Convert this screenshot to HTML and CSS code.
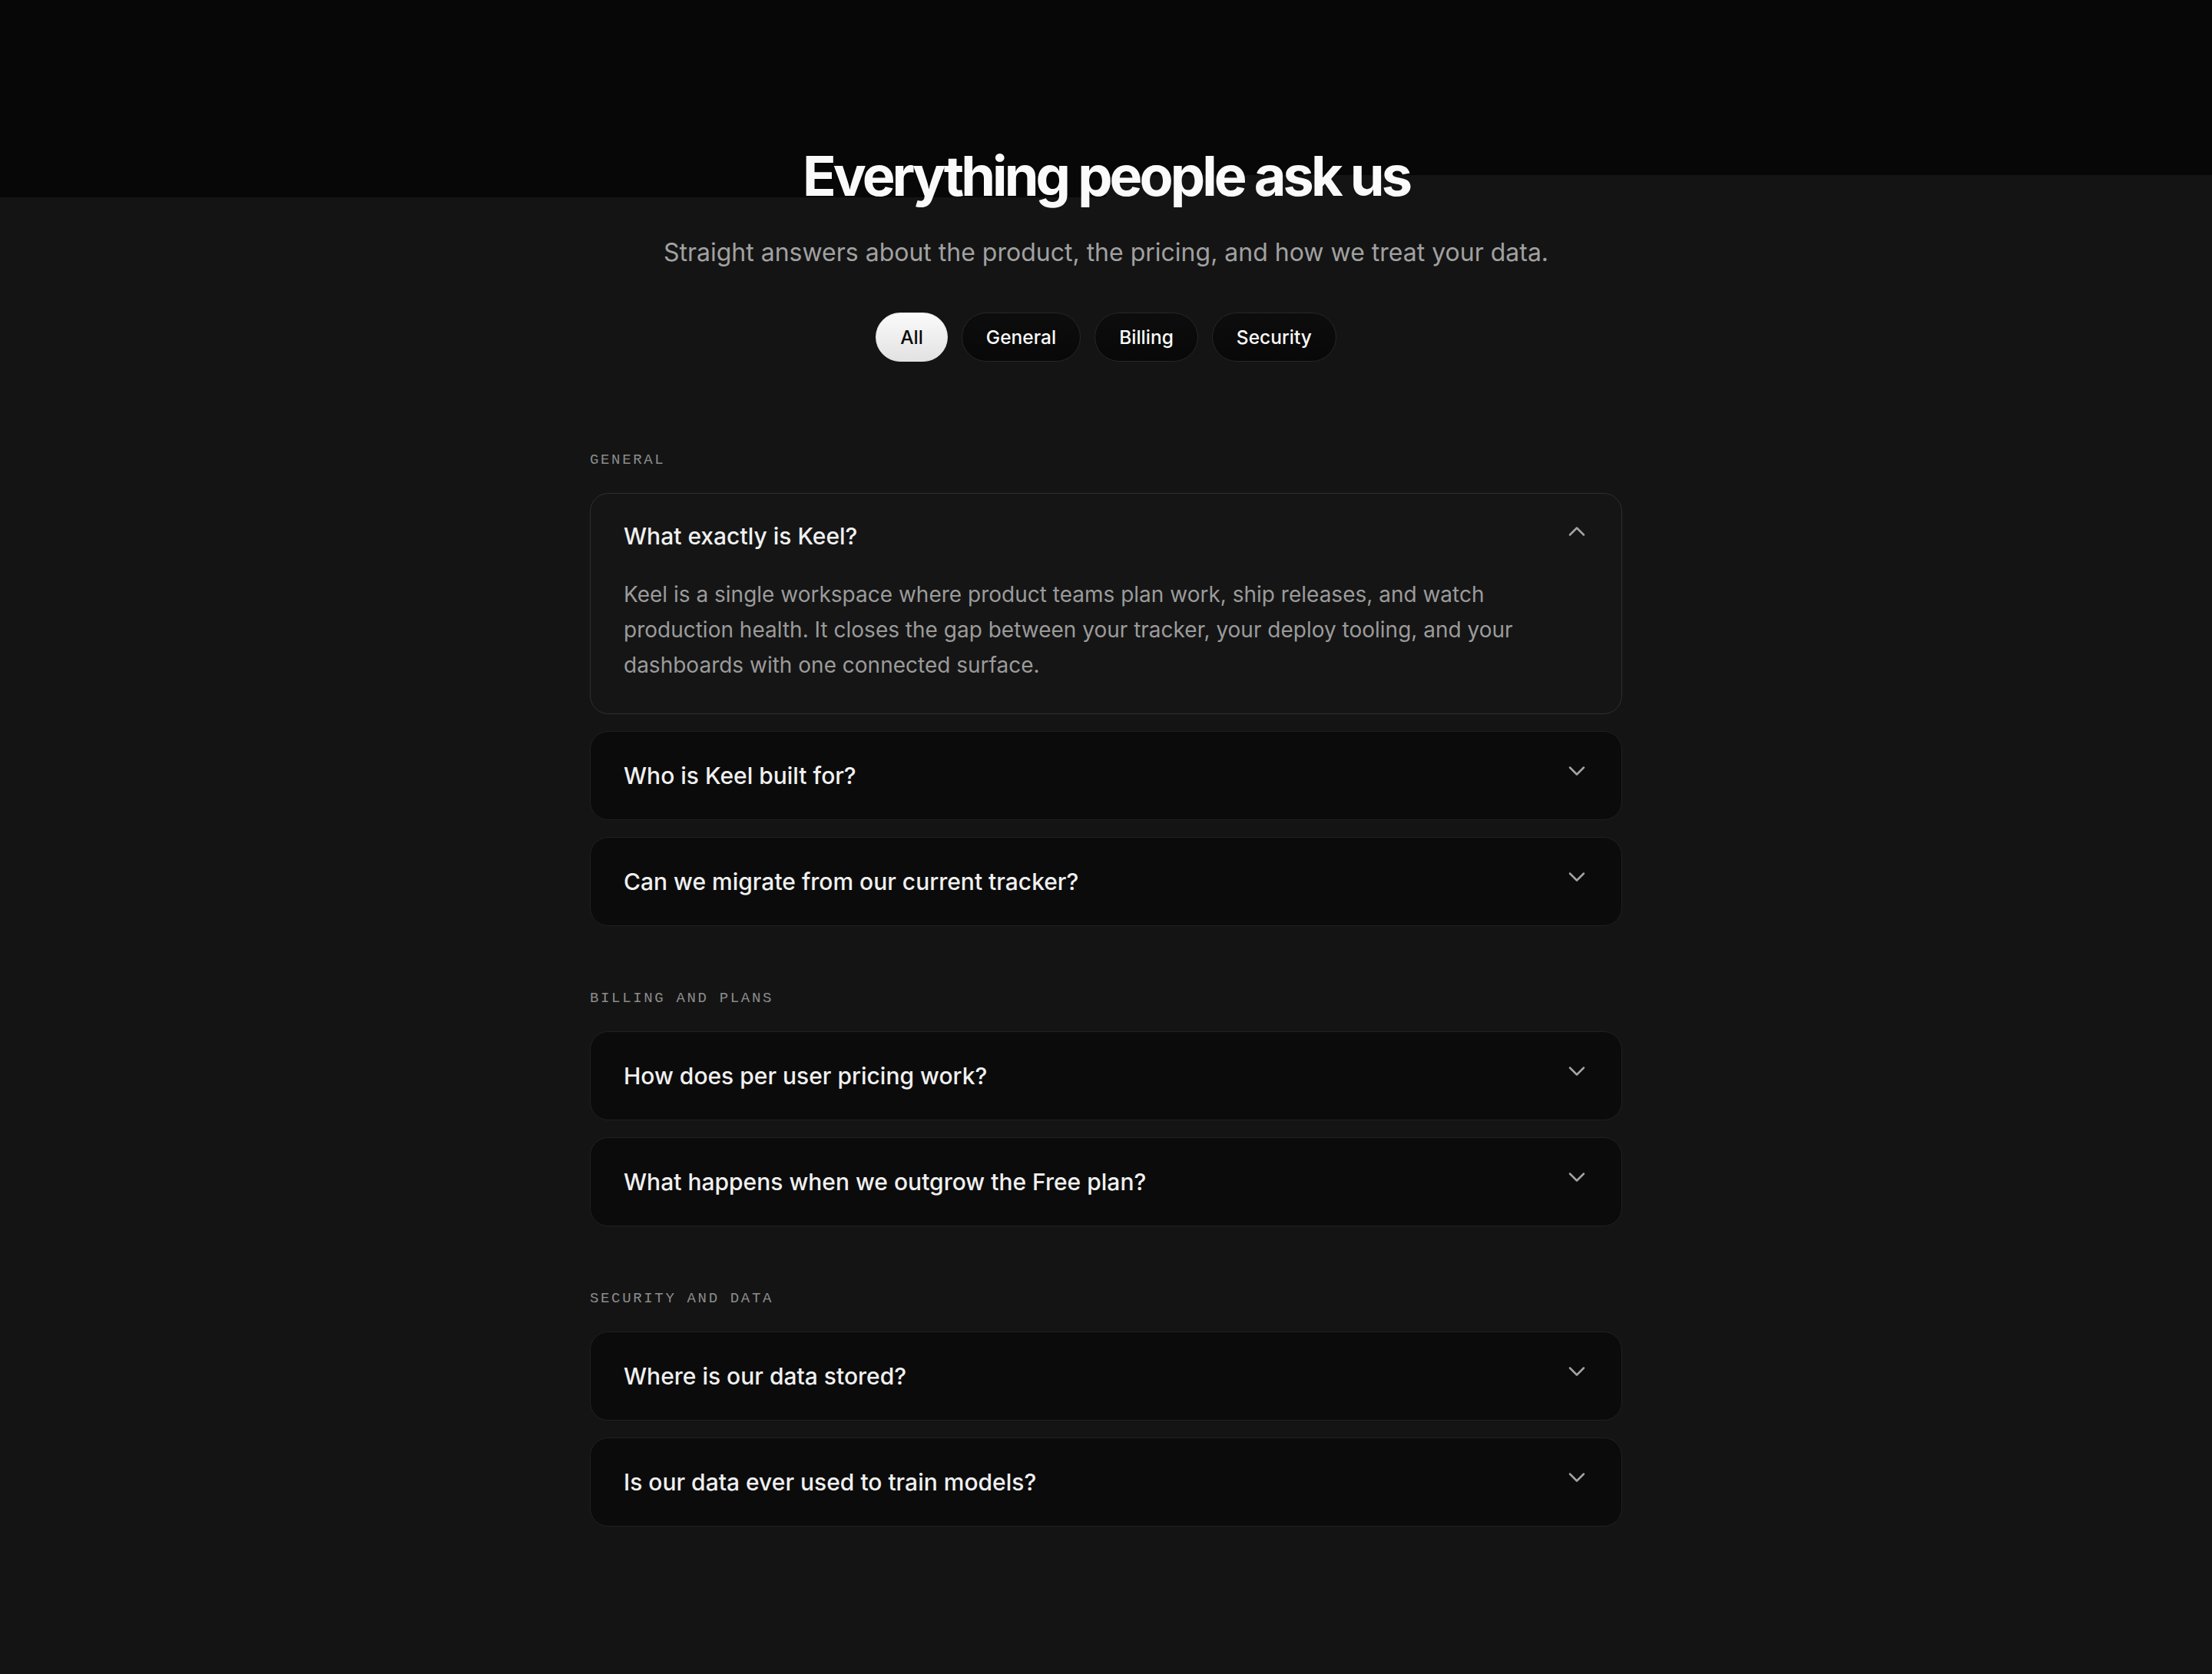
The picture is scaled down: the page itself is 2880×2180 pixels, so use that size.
FILE: index.html
```html
<!DOCTYPE html>
<html lang="en">
<head>
<meta charset="utf-8">
<title>FAQ</title>
<link rel="stylesheet" href="styles.css">
</head>
<body>
<main class="page">
  <header class="hero">
    <h1 class="title">Everything people ask us</h1>
    <p class="subtitle">Straight answers about the product, the pricing, and how we treat your data.</p>
    <nav class="filters">
      <button class="pill pill-active">All</button>
      <button class="pill">General</button>
      <button class="pill">Billing</button>
      <button class="pill">Security</button>
    </nav>
  </header>

  <section class="group">
    <h2 class="group-label">GENERAL</h2>
    <div class="items">
      <div class="item item-open">
        <div class="question">
          <span class="q-text">What exactly is Keel?</span>
          <svg class="chev" viewBox="0 0 24 24" fill="none" stroke="currentColor" stroke-width="2" stroke-linecap="round" stroke-linejoin="round"><path d="m6 15 6-6 6 6"/></svg>
        </div>
        <p class="answer">Keel is a single workspace where product teams plan work, ship releases, and watch production health. It closes the gap between your tracker, your deploy tooling, and your dashboards with one connected surface.</p>
      </div>
      <div class="item">
        <div class="question">
          <span class="q-text">Who is Keel built for?</span>
          <svg class="chev" viewBox="0 0 24 24" fill="none" stroke="currentColor" stroke-width="2" stroke-linecap="round" stroke-linejoin="round"><path d="m6 9 6 6 6-6"/></svg>
        </div>
      </div>
      <div class="item">
        <div class="question">
          <span class="q-text">Can we migrate from our current tracker?</span>
          <svg class="chev" viewBox="0 0 24 24" fill="none" stroke="currentColor" stroke-width="2" stroke-linecap="round" stroke-linejoin="round"><path d="m6 9 6 6 6-6"/></svg>
        </div>
      </div>
    </div>
  </section>

  <section class="group">
    <h2 class="group-label">BILLING AND PLANS</h2>
    <div class="items">
      <div class="item">
        <div class="question">
          <span class="q-text">How does per user pricing work?</span>
          <svg class="chev" viewBox="0 0 24 24" fill="none" stroke="currentColor" stroke-width="2" stroke-linecap="round" stroke-linejoin="round"><path d="m6 9 6 6 6-6"/></svg>
        </div>
      </div>
      <div class="item">
        <div class="question">
          <span class="q-text">What happens when we outgrow the Free plan?</span>
          <svg class="chev" viewBox="0 0 24 24" fill="none" stroke="currentColor" stroke-width="2" stroke-linecap="round" stroke-linejoin="round"><path d="m6 9 6 6 6-6"/></svg>
        </div>
      </div>
    </div>
  </section>

  <section class="group">
    <h2 class="group-label">SECURITY AND DATA</h2>
    <div class="items">
      <div class="item">
        <div class="question">
          <span class="q-text">Where is our data stored?</span>
          <svg class="chev" viewBox="0 0 24 24" fill="none" stroke="currentColor" stroke-width="2" stroke-linecap="round" stroke-linejoin="round"><path d="m6 9 6 6 6-6"/></svg>
        </div>
      </div>
      <div class="item">
        <div class="question">
          <span class="q-text">Is our data ever used to train models?</span>
          <svg class="chev" viewBox="0 0 24 24" fill="none" stroke="currentColor" stroke-width="2" stroke-linecap="round" stroke-linejoin="round"><path d="m6 9 6 6 6-6"/></svg>
        </div>
      </div>
    </div>
  </section>
</main>
</body>
</html>
```
FILE: styles.css
```css
html, body {
  margin: 0;
  padding: 0;
}
body {
  min-height: 2180px;
  background-color: #141414;
  background-image:
    linear-gradient(#070707, #070707),
    linear-gradient(#070707, #070707);
  background-repeat: no-repeat;
  background-size: 50% 257px, 50% 228px;
  background-position: left top, right top;
  font-family: Inter, "Noto Sans", sans-serif;
  color: #f2f2f2;
}
.page {
  width: 1344px;
  margin: 0 auto;
  padding: 189px 0 120px;
}
.hero {
  display: flex;
  flex-direction: column;
  align-items: center;
}
.title {
  margin: 0;
  font-size: 72px;
  line-height: 79px;
  font-weight: 700;
  letter-spacing: -0.055em;
  color: #fafafa;
}
.subtitle {
  margin: 39px 0 0;
  font-size: 32px;
  line-height: 44px;
  color: #a1a1a1;
  font-weight: 400;
}
.filters {
  display: flex;
  gap: 18px;
  margin-top: 56px;
}
.pill {
  font-family: Inter, "Noto Sans", sans-serif;
  font-size: 24.5px;
  font-weight: 500;
  line-height: 36px;
  padding: 13px 31px;
  border-radius: 999px;
  border: 1px solid #262626;
  background: linear-gradient(#0d0d0d, #080808);
  color: #fafafa;
}
.pill-active {
  background: linear-gradient(#fafafa, #e2e2e2);
  border-color: #e4e4e4;
  color: #0a0a0a;
}
.group {
  margin-top: 82px;
}
.group:first-of-type {
  margin-top: 116px;
}
.group-label {
  margin: 0 0 31px;
  font-family: "Courier New", Courier, "Nimbus Mono PS", FreeMono, "Liberation Mono", monospace;
  font-size: 19px;
  line-height: 24px;
  font-weight: 400;
  letter-spacing: 0.14em;
  color: #8c8c8c;
}
.items {
  display: flex;
  flex-direction: column;
  gap: 22px;
}
.item {
  background: #0b0b0b;
  border: 1px solid #202020;
  border-radius: 24px;
  padding: 37px 40px 37px 43px;
}
.item-open {
  background: #151515;
  border-color: #2f2f2f;
  padding-top: 35px;
  padding-bottom: 40px;
}
.question {
  display: flex;
  align-items: flex-start;
  justify-content: space-between;
}
.q-text {
  font-size: 30px;
  line-height: 40px;
  font-weight: 500;
  color: #f0f0f0;
  letter-spacing: 0;
}
.chev {
  width: 36px;
  height: 36px;
  margin-top: -4px;
  color: #a3a3a3;
  stroke-width: 1.7;
  flex: none;
}
.item-open .chev {
  margin-top: -4px;
}
.answer {
  margin: 33px 40px 0 0;
  font-size: 28px;
  line-height: 46px;
  color: #9b9b9b;
  max-width: 1200px;
}
```
